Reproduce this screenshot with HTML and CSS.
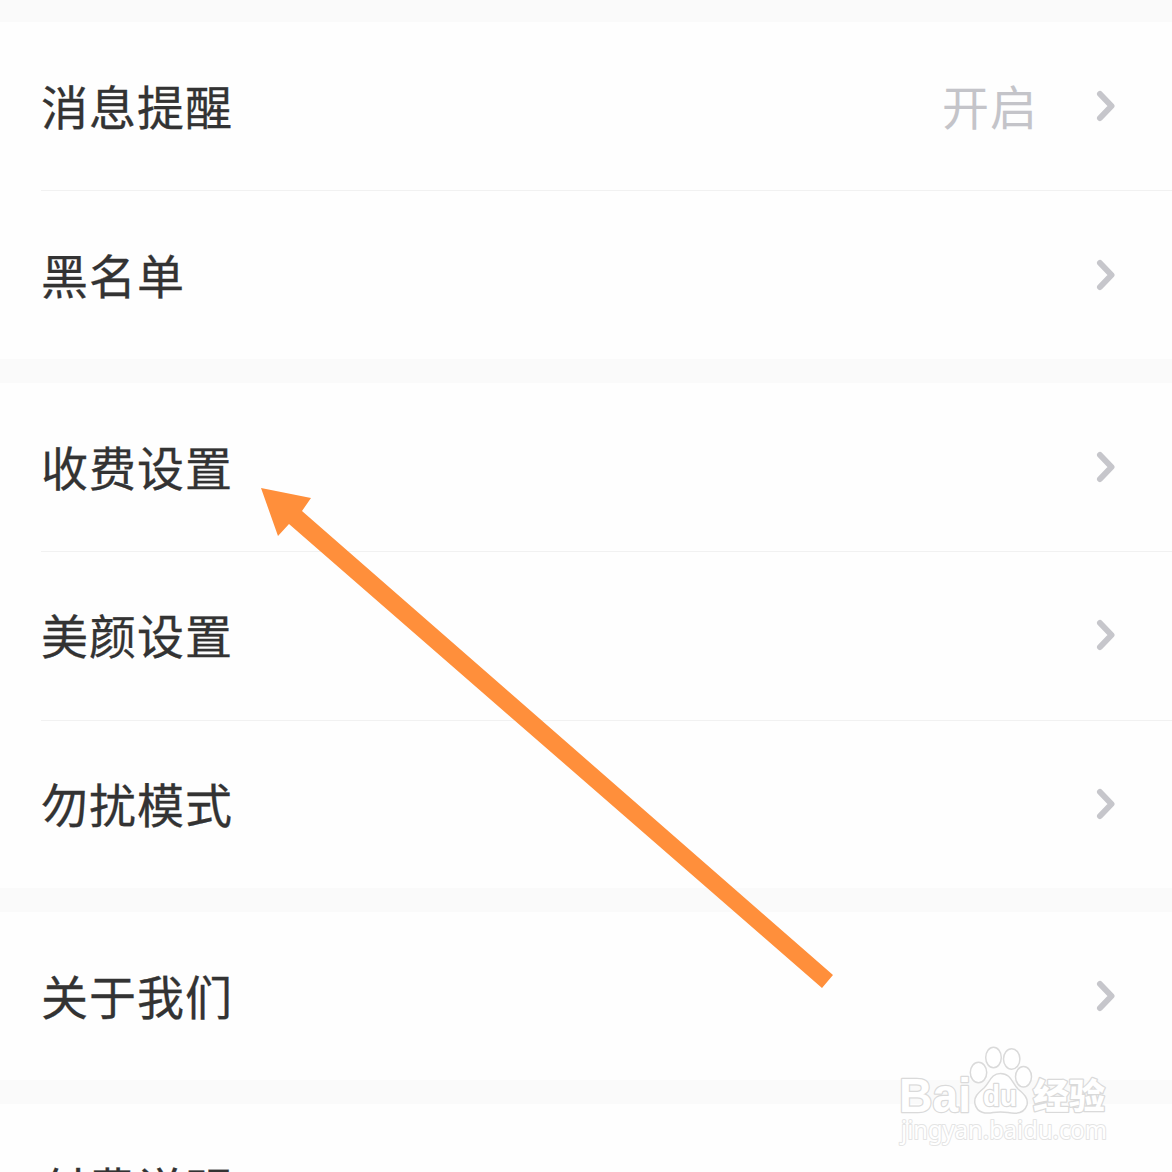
FILE: index.html
```html
<!DOCTYPE html>
<html lang="zh-CN">
<head>
<meta charset="utf-8">
<title>设置</title>
<link rel="stylesheet" href="styles.css">
</head>
<body>
<svg class="defs" width="0" height="0"><symbol id="chevron" viewBox="0 0 24 36"><path d="M6 6 L17.500 18 L6 30"/></symbol></svg>
<main class="settings">
  <section class="group">
    <div class="row"><span class="label">消息提醒</span><span class="value">开启</span><svg class="chevron"><use href="#chevron"/></svg></div>
    <div class="row"><span class="label">黑名单</span><svg class="chevron"><use href="#chevron"/></svg></div>
  </section>
  <section class="group">
    <div class="row"><span class="label">收费设置</span><svg class="chevron"><use href="#chevron"/></svg></div>
    <div class="row"><span class="label">美颜设置</span><svg class="chevron"><use href="#chevron"/></svg></div>
    <div class="row"><span class="label">勿扰模式</span><svg class="chevron"><use href="#chevron"/></svg></div>
  </section>
  <section class="group">
    <div class="row"><span class="label">关于我们</span><svg class="chevron"><use href="#chevron"/></svg></div>
  </section>
  <section class="group">
    <div class="row"><span class="label">付费说明</span><svg class="chevron"><use href="#chevron"/></svg></div>
  </section>
</main>
<svg class="arrow" viewBox="0 0 574 504"><path d="M1 1 L51 11 L42 24 L573 488 L562 501 L29 37 L18 49 Z"/></svg>
<svg class="watermark" viewBox="0 0 220 112">
  <g class="paw">
    <ellipse cx="86.500" cy="32.500" rx="8.200" ry="10.300"/>
    <ellipse cx="101.500" cy="17.500" rx="7.800" ry="10.300"/>
    <ellipse cx="119.700" cy="19" rx="8.200" ry="10.300"/>
    <ellipse cx="131.500" cy="36.700" rx="8" ry="10.300"/>
    <path d="M108.500 33.500 C119 33.500 120 43 126 49 C132 54 136.500 58 135 65 C132 74 123 74 116 72.500 Q108.500 71.500 101 72.500 C94 74 85 73 83 64 C81.500 57 86 53 92 48 C98 42 99 33.500 108.500 33.500 Z"/>
  </g>
  <text class="brand" x="7" y="72" textLength="72" lengthAdjust="spacingAndGlyphs">Bai</text>
  <text class="du" x="91" y="66" textLength="34" lengthAdjust="spacingAndGlyphs">du</text>
  <text class="cn" x="141" y="69" textLength="72" lengthAdjust="spacingAndGlyphs">经验</text>
  <text class="site" x="9" y="98.500" textLength="206" lengthAdjust="spacingAndGlyphs">jingyan.baidu.com</text>
</svg>
</body>
</html>
```
FILE: styles.css
```css
* { box-sizing: border-box; }
html, body { height: 100%; }
body {
  margin: 0;
  position: relative;
  overflow: hidden;
  background: #fafafa;
  color: #333;
  font-family: "Noto Sans CJK SC", "Noto Sans", sans-serif;
}
.defs { display: block; }
.settings {
  display: flex;
  flex-direction: column;
  gap: 23.750px;
  height: 1172px;
  padding-top: 21.900px;
  overflow: hidden;
}
.group { flex: none; background: #fefefe; }
.row {
  display: flex;
  align-items: center;
  position: relative;
  height: 168.500px;
  padding: 0 54px 0 41px;
}
.row + .row::before {
  content: "";
  position: absolute;
  top: 0;
  left: 41px;
  right: 0;
  height: 1px;
  background: #f1f1f1;
}
.label, .value {
  padding-bottom: 2px;
  font-size: 47px;
  line-height: 72px;
  letter-spacing: 1px;
  -webkit-text-stroke: 0.300px currentColor;
}
.label { flex: 1; }
.value { color: #c4c4c9; margin-right: 56px; -webkit-text-stroke: 0; }
.chevron {
  width: 24px;
  height: 36px;
  fill: none;
  stroke: #c6c6cb;
  stroke-width: 6;
  stroke-linecap: round;
  stroke-linejoin: round;
}
.arrow {
  position: absolute;
  left: 260px;
  top: 487px;
  width: 574px;
  height: 504px;
  fill: #ff8f3b;
}
.watermark {
  position: absolute;
  left: 892px;
  top: 1040px;
  width: 220px;
  height: 112px;
  fill: #fff;
  stroke: #dadada;
  stroke-width: 1.500;
}
.watermark text { paint-order: stroke; stroke-width: 2.500; stroke-linejoin: round; }
.brand { font: bold 48px "Liberation Sans", sans-serif; }
.du { font: bold 29px "Liberation Sans", sans-serif; }
.cn { font: 900 35px "Noto Sans CJK SC", sans-serif; }
.watermark .site { font: 25px "Noto Sans", sans-serif; stroke: #e4e4e4; stroke-width: 2; }
```
